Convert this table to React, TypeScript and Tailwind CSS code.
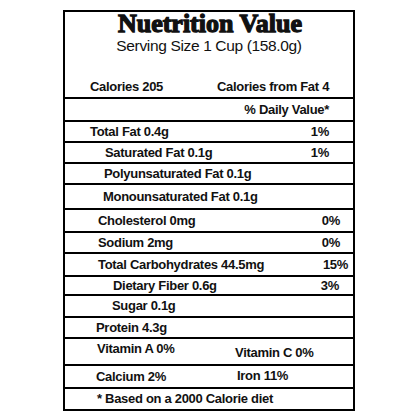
import React from "react";

type Row = {
  h: string;
  label: string;
  pl: string;
  pct?: string;
  pr?: string;
};

const rows: Row[] = [
  { h: "h-[21px]", label: "Total Fat 0.4g", pl: "pl-[25px]", pct: "1%", pr: "pr-[24px]" },
  { h: "h-[21px]", label: "Saturated Fat 0.1g", pl: "pl-[40px]", pct: "1%", pr: "pr-[24px]" },
  { h: "h-[21px]", label: "Polyunsaturated Fat 0.1g", pl: "pl-[39px]" },
  { h: "h-[25px]", label: "Monounsaturated Fat 0.1g", pl: "pl-[38px]" },
  { h: "h-[23px]", label: "Cholesterol 0mg", pl: "pl-[33px]", pct: "0%", pr: "pr-[13px]" },
  { h: "h-[21px]", label: "Sodium 2mg", pl: "pl-[33px]", pct: "0%", pr: "pr-[13px]" },
  { h: "h-[23px]", label: "Total Carbohydrates 44.5mg", pl: "pl-[33px]", pct: "15%", pr: "pr-[5px]" },
  { h: "h-[19px]", label: "Dietary Fiber 0.6g", pl: "pl-[48px]", pct: "3%", pr: "pr-[14px]" },
  { h: "h-[22px]", label: "Sugar 0.1g", pl: "pl-[47px]" },
  { h: "h-[21px]", label: "Protein 4.3g", pl: "pl-[31px]" },
];

export default function App() {
  const sans = "font-['Liberation_Sans',Arial,sans-serif]";
  return (
    <div className="w-[420px] h-[420px] bg-white overflow-hidden">
      <div
        className={`ml-[63px] mt-[10px] w-[292px] h-[401px] border-2 border-black text-[#111] ${sans} font-bold text-[13px] tracking-[-0.3px]`}
      >
        <div className="h-[85px] flex flex-col items-center">
          <div className="-mt-[2px] h-[27px] leading-[27px] font-['Liberation_Serif',serif] font-bold text-[26px] tracking-normal [-webkit-text-stroke:1.3px_#111] pl-[2px]">
            Nuetrition Value
          </div>
          <div className="h-[18px] leading-[18px] font-normal text-[15.5px] tracking-[-0.35px]">
            Serving Size 1 Cup (158.0g)
          </div>
          <div className="mt-auto mb-[2px] h-[16px] leading-[16px] w-full flex">
            <span className="pl-[25px] w-[152px]">Calories 205</span>
            <span>Calories from Fat 4</span>
          </div>
        </div>
        <div className="h-[23px] border-t-2 border-black flex items-center justify-end pr-[24px]">
          % Daily Value*
        </div>
        {rows.map((r) => (
          <div key={r.label} className={`${r.h} border-t-2 border-black flex items-center ${r.pl} ${r.pr ?? ""}`}>
            <span>{r.label}</span>
            {r.pct && <span className="ml-auto">{r.pct}</span>}
          </div>
        ))}
        <div className="h-[27px] border-t-2 border-black flex items-center pl-[32px]">
          <span className="w-[138px] mb-[5px]">Vitamin A 0%</span>
          <span className="mt-[2px]">Vitamin C 0%</span>
        </div>
        <div className="h-[23px] border-t-2 border-black flex items-center pl-[31px]">
          <span className="w-[141px]">Calcium 2%</span>
          <span className="mb-[2px]">Iron 11%</span>
        </div>
        <div className="h-[22px] border-t-2 border-black flex items-center pl-[32px]">
          * Based on a 2000 Calorie diet
        </div>
      </div>
    </div>
  );
}
